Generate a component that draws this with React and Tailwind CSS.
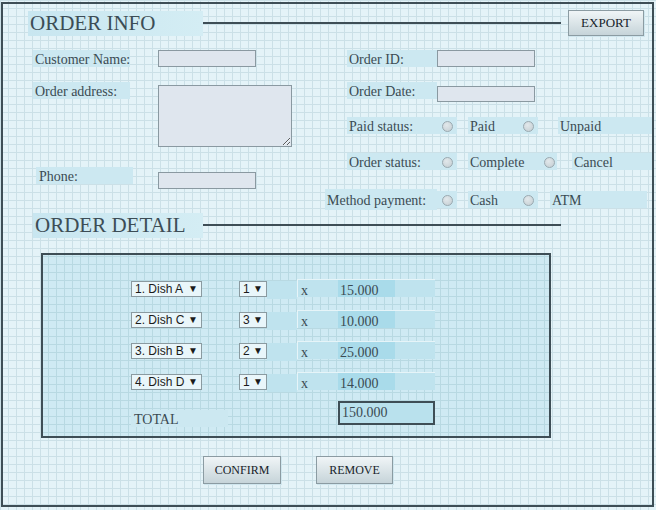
import React from "react";

const grid =
  "bg-[#e4f3f8] bg-[linear-gradient(to_right,#cbe0e7_1px,transparent_1px),linear-gradient(to_bottom,#cbe0e7_1px,transparent_1px)] bg-[length:8px_8px]";

const Label = ({ children, className = "" }) => (
  <div
    className={`h-[17px] bg-[#cce8f1] pl-[2px] pt-[1px] text-[14px] leading-[17px] text-[#3b4b53] whitespace-nowrap ${className}`}
  >
    {children}
  </div>
);

const Field = ({ className = "" }) => (
  <div className={`bg-[#dfe6ee] border border-[#8a99a1] ${className}`} />
);

const Radio = ({ className = "w-[20px]" }) => (
  <div className={`h-[17px] bg-[#cce8f1] flex items-center justify-center ${className}`}>
    <div className="mt-[2px] w-[11px] h-[11px] rounded-full border border-[#9aa9b0] bg-[radial-gradient(circle_at_40%_35%,#e2e8eb,#c3cdd2)]" />
  </div>
);

const Button = ({ children, className = "" }) => (
  <div
    className={`flex items-center justify-center border border-[#8b9ba2] bg-[linear-gradient(to_bottom,#f0f5f7,#c6d4d9)] shadow-[1px_1px_0_#cfe6ee] text-[12px] text-[#17232a] ${className}`}
  >
    {children}
  </div>
);

const Select = ({ text, className = "" }) => (
  <div
    className={`h-[16px] flex items-center justify-between px-[3px] bg-[#e9f6fa] border border-[#8a9aa0] font-['Liberation_Sans',Arial,sans-serif] text-[12px] text-[#1b1b1b] ${className}`}
  >
    <span>{text}</span>
    <span className="text-[10px] leading-none">▼</span>
  </div>
);

const Row = ({ dish, qty, price }) => (
  <div className="flex items-start h-[16px] mb-[15px]">
    <Select text={dish} className="w-[71px]" />
    <Select text={qty} className="ml-[37px] w-[28px]" />
    <div className="w-[30px] h-[18px] bg-[#bfe3ee]" />
    <div className="w-[41px] h-[18px] -mt-[2px] pl-[3px] bg-[#bfe3ee] border-l border-t border-[#e6f4f8] text-[14px] leading-[21px] text-[#3b4b53]">
      x
    </div>
    <div className="w-[97px] h-[18px] -mt-[2px] pl-[2px] bg-[linear-gradient(to_right,#a9dbea_57px,#bfe3ee_57px)] border-t border-[#e6f4f8] text-[14px] leading-[21px] text-[#3b4b53]">
      {price}
    </div>
  </div>
);

const Header = ({ title, className = "", titleClass = "" }) => (
  <div className={`flex items-center h-[26px] ${className}`}>
    <div
      className={`h-[25px] flex items-center pl-[2px] pt-[1px] bg-[linear-gradient(to_right,#c8e6f0,#d4edf4)] text-[21px] text-[#3c4d56] ${titleClass}`}
    >
      {title}
    </div>
    <div className="w-[358px] h-[2px] bg-[#3e4e56]" />
  </div>
);

export default function App() {
  return (
    <div className={`w-[656px] h-[510px] pt-[2px] pl-[1px] overflow-hidden font-['Liberation_Serif',Georgia,serif] ${grid}`}>
      <div className="w-[653px] h-[505px] border-2 border-[#3e4e56]">
        {/* order info header */}
        <div className="mt-[6px] flex items-center h-[26px]">
          <Header title="ORDER INFO" titleClass="ml-[25px] w-[175px]" />
          <Button className="ml-[7px] w-[76px] h-[26px] text-[13px]">EXPORT</Button>
        </div>

        {/* form */}
        <div className="mt-[14px] flex">
          <div className="ml-[30px] w-[292px]">
            <div className="flex">
              <Label className="w-[97px]">Customer Name:</Label>
              <Field className="ml-[28px] w-[98px] h-[17px]" />
            </div>
            <div className="mt-[15px] flex items-start">
              <Label className="w-[97px]">Order address:</Label>
              <textarea
                readOnly
                className="ml-[28px] mt-[3px] w-[134px] h-[62px] bg-[#dfe6ee] border border-[#8a99a1] resize outline-none"
              />
            </div>
            <div className="mt-[20px] flex items-start">
              <Label className="ml-[3px] w-[97px] pl-[3px]">Phone:</Label>
              <Field className="ml-[25px] mt-[5px] w-[98px] h-[17px]" />
            </div>
          </div>

          <div className="flex-1">
            <div className="ml-[22px] flex">
              <Label className="w-[90px]">Order ID:</Label>
              <Field className="w-[98px] h-[17px]" />
            </div>
            <div className="ml-[22px] mt-[15px] flex items-start">
              <Label className="w-[90px]">Order Date:</Label>
              <Field className="mt-[4px] w-[98px] h-[16px]" />
            </div>
            <div className="ml-[22px] mt-[15px] flex">
              <Label className="w-[90px]">Paid status:</Label>
              <Radio />
              <Label className="ml-[11px] w-[50px]">Paid</Label>
              <Radio />
              <Label className="ml-[20px] w-[94px]">Unpaid</Label>
            </div>
            <div className="ml-[22px] mt-[19px] flex">
              <Label className="w-[90px]">Order status:</Label>
              <Radio />
              <Label className="ml-[11px] w-[73px]">Complete</Label>
              <Radio className="w-[16px]" />
              <Label className="ml-[15px] w-[80px]">Cancel</Label>
            </div>
            <div className="mt-[19px] flex items-center h-[21px]">
              <Label className="w-[112px] h-[21px] leading-[21px]">Method payment:</Label>
              <Radio />
              <Label className="ml-[11px] w-[50px]">Cash</Label>
              <Radio />
              <Label className="ml-[12px] w-[97px]">ATM</Label>
            </div>
          </div>
        </div>

        {/* order detail */}
        <Header title="ORDER DETAIL" className="mt-[2px]" titleClass="ml-[30px] w-[170px]" />

        <div className="mt-[15px] ml-[38px] w-[510px] h-[185px] border-2 border-[#3e4e56] bg-[#cfeaf3] bg-[linear-gradient(to_right,#b8d9e2_1px,transparent_1px),linear-gradient(to_bottom,#b8d9e2_1px,transparent_1px)] bg-[length:8px_8px] bg-fixed">
          <div className="pt-[26px] pl-[88px]">
            <Row dish="1. Dish A" qty="1" price="15.000" />
            <Row dish="2. Dish C" qty="3" price="10.000" />
            <Row dish="3. Dish B" qty="2" price="25.000" />
            <Row dish="4. Dish D" qty="1" price="14.000" />
            <div className="-mt-[4px] flex items-start">
              <Label className="mt-[9px] w-[97px] pl-[3px] bg-[#bfe3ee]">TOTAL</Label>
              <div className="ml-[110px] w-[97px] h-[24px] border-2 border-[#3e4e56] bg-[#b9e1ed] pl-[2px] text-[14px] leading-[20px] text-[#3b4b53]">
                150.000
              </div>
            </div>
          </div>
        </div>

        <div className="mt-[18px] ml-[200px] flex gap-[35px]">
          <Button className="w-[78px] h-[28px]">CONFIRM</Button>
          <Button className="w-[77px] h-[28px]">REMOVE</Button>
        </div>
      </div>
    </div>
  );
}
